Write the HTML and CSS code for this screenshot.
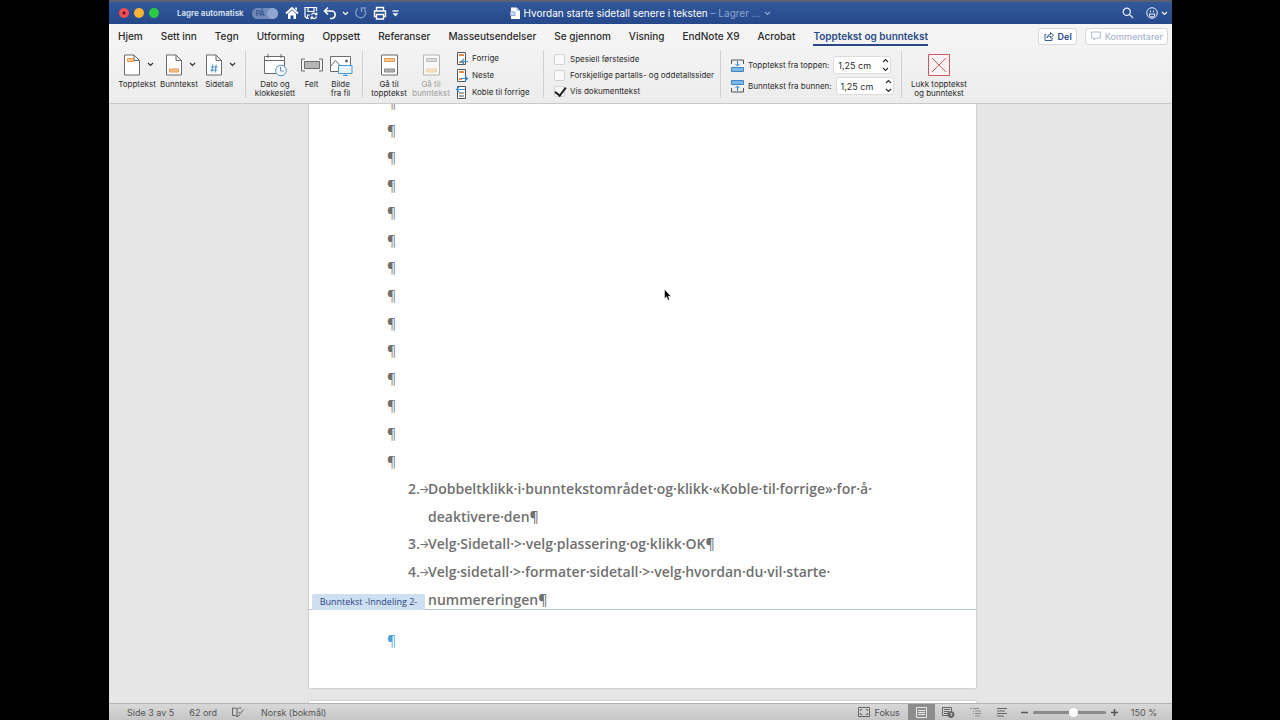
FILE: index.html
```html
<!DOCTYPE html>
<html lang="no">
<head>
    <meta charset="UTF-8">
    <meta name="viewport" content="width=device-width, initial-scale=1.0">
    <title>Hvordan starte sidetall senere i teksten</title>
    <link rel="stylesheet" href="styles.css">
</head>
<body>
    <!-- Felles symboler -->
    <svg class="defs" width="0" height="0">
        <symbol id="caret" viewBox="0 0 7 5"><path d="M1 1l2.500 2.500L6 1" fill="none" stroke="currentColor" stroke-width="1.100"/></symbol>
        <symbol id="page" viewBox="0 0 16 22"><path d="M.5 1h9.500l5.500 5.500v14.500h-15zM10 1v5.500h5.500" fill="#fff" stroke="#6b6b6b"/></symbol>
    </svg>

    <div class="app">
        <header class="titlebar">
            <div class="title-left">
                <div class="lights">
                    <button class="light red" aria-label="Lukk"></button>
                    <button class="light yellow" aria-label="Minimer"></button>
                    <button class="light green" aria-label="Zoom"></button>
                </div>
                <label for="autosave">Lagre automatisk</label>
                <span class="switch"><input type="checkbox" id="autosave" checked><span>PÅ</span></span>
                <div class="quick">
                    <button aria-label="Hjem"><svg width="14" height="14" viewBox="0 0 14 14"><path d="M1 7.500L7 2l6 5.500" fill="none" stroke="#fff" stroke-width="1.800"/><path d="M3 7.800L7 4.300l4 3.500V13H8.500V9.500h-3V13H3zM10 1.500h2v3l-2-1.800z" fill="#fff"/></svg></button>
                    <button aria-label="Lagre"><svg width="14" height="14" viewBox="0 0 14 14" fill="none" stroke="#fff" stroke-width="1.200"><path d="M5 12.500H3L1 10.500V1.500h11.500v3.500M4 1.500v4h6v-4M3.500 12V9H6"/><path d="M7.500 9.200a2.600 2.600 0 0 1 4.800-.7M12.800 6.500v2.200h-2M12.500 10.500a2.600 2.600 0 0 1-4.800.7M7.200 13.300v-2.200h2"/></svg></button>
                    <button aria-label="Angre"><svg width="14" height="14" viewBox="0 0 14 14" fill="none" stroke="#fff" stroke-width="1.600"><path d="M5 1.500L1.500 5 5 8.500M2 5h6.500a3.500 3.500 0 0 1 0 7.500H7"/></svg></button>
                    <button aria-label="Flere angrevalg"><svg width="7" height="5"><use href="#caret"/></svg></button>
                    <button aria-label="Gjør om" disabled><svg width="14" height="14" viewBox="0 0 14 14" fill="none" stroke="#7f97c6" stroke-width="1.400"><path d="M4 2.500a5 5 0 1 0 6.500 1M7.500 6V2h4.500"/></svg></button>
                    <button aria-label="Skriv ut"><svg width="14" height="14" viewBox="0 0 14 14" fill="none" stroke="#fff" stroke-width="1.400"><path d="M3.500 5V1.500h7V5M3.500 10.500H1.500V5h11v5.500h-2M3.500 8.500h7v4.500h-7z"/></svg></button>
                    <button aria-label="Tilpass"><svg width="7" height="7" viewBox="0 0 7 7"><path d="M.5 1h6" stroke="#fff" stroke-width="1.300"/><path d="M.5 3.200h6L3.500 6.500z" fill="#fff"/></svg></button>
                </div>
            </div>
            <div class="doc-title">
                <svg width="10" height="12" viewBox="0 0 10 12"><path d="M1 .5h5.500L10 4v8H1z" fill="#fff"/><path d="M6.500.5V4H10z" fill="#b8cbe8"/><path d="M0 4.500h5.500v4.500H0z" fill="#86aade"/><path d="M1 5.500l.8 2.300.9-2 .9 2 .8-2.300" fill="none" stroke="#fff" stroke-width=".7"/></svg>
                <span>Hvordan starte sidetall senere i teksten <em>– Lagrer ...</em></span>
                <svg class="dim" width="7" height="5"><use href="#caret"/></svg>
            </div>
            <div class="title-right">
                <button aria-label="Søk"><svg width="12" height="12" viewBox="0 0 12 12" fill="none" stroke="#e8eefa" stroke-width="1.200"><circle cx="4.800" cy="4.800" r="3.600"/><path d="M7.500 7.500l3.700 3.700"/></svg></button>
                <button aria-label="Tilbakemelding"><svg width="12" height="12" viewBox="0 0 12 12" fill="none" stroke="#e8eefa"><circle cx="6" cy="6" r="5.300"/><path d="M3 7a3 3 0 0 0 6 0zM4.500 3.500v1.800M7.500 3.500v1.800"/></svg><svg width="7" height="5"><use href="#caret"/></svg></button>
            </div>
        </header>

        <nav class="tabs">
            <a href="#">Hjem</a>
            <a href="#">Sett inn</a>
            <a href="#">Tegn</a>
            <a href="#">Utforming</a>
            <a href="#">Oppsett</a>
            <a href="#">Referanser</a>
            <a href="#">Masseutsendelser</a>
            <a href="#">Se gjennom</a>
            <a href="#">Visning</a>
            <a href="#">EndNote X9</a>
            <a href="#">Acrobat</a>
            <a href="#" class="active">Topptekst og bunntekst</a>
            <div class="tab-actions">
                <button class="share"><svg width="10" height="10" viewBox="0 0 10 10" fill="none" stroke="#2b4a86" stroke-width=".9"><path d="M2.500 3.500H1v6h7V7"/><path d="M3 7c.2-2.500 1.500-3.500 3.500-3.500V1.500l3 2.700-3 2.700V5.200C5 5.200 4 5.700 3 7z"/></svg>Del</button>
                <button class="comments"><svg width="10" height="10" viewBox="0 0 10 10" fill="none" stroke="#a9b3cc" stroke-width=".9"><path d="M.6 1h8.800v6H5L3 9V7H.6z"/></svg>Kommentarer</button>
            </div>
        </nav>

        <div class="ribbon">
            <div class="group insert">
                <button class="tool">
                    <span class="icon with-caret"><svg width="16" height="22" viewBox="0 0 16 22"><use href="#page"/><path d="M3.500 4.500h6v3h-6z" fill="#f8c78d" stroke="#e5994f"/></svg><svg width="7" height="5"><use href="#caret"/></svg></span>
                    Topptekst
                </button>
                <button class="tool">
                    <span class="icon with-caret"><svg width="16" height="22" viewBox="0 0 16 22"><use href="#page"/><path d="M3.500 15h9v3h-9z" fill="#f8c78d" stroke="#e5994f"/></svg><svg width="7" height="5"><use href="#caret"/></svg></span>
                    Bunntekst
                </button>
                <button class="tool small">
                    <span class="icon with-caret"><svg width="16" height="22" viewBox="0 0 16 22"><use href="#page"/><path d="M6.800 10.500l-1 8M10.200 10.500l-1 8M4.800 13h6.800M4.400 16h6.800" stroke="#4a90c8" fill="none"/></svg><svg width="7" height="5"><use href="#caret"/></svg></span>
                    Sidetall
                </button>
            </div>

            <div class="group fields">
                <button class="tool wide">
                    <span class="icon"><svg width="24" height="24" viewBox="0 0 24 24" fill="none" stroke="#6b6b6b"><path d="M1.500 3.500h20v17h-20z" fill="#fff"/><path d="M1.500 7.500h20M5 1v4M18 1v4"/><circle cx="18" cy="17.500" r="5.300" fill="#fff" stroke="#4a8fc7"/><path d="M17.500 14v4h3.500" stroke="#4a8fc7"/></svg></span>
                    Dato og<br>klokkeslett
                </button>
                <button class="tool slim">
                    <span class="icon"><svg width="22" height="14" viewBox="0 0 22 14" fill="none" stroke="#6b6b6b"><path d="M4 1H.5v12H4M18 1h3.500v12H18"/><path d="M3.500 3.500h15v7h-15z" fill="#b5b5b5"/></svg></span>
                    Felt
                </button>
                <button class="tool slim">
                    <span class="icon"><svg width="24" height="22" viewBox="0 0 24 22" fill="none" stroke="#6b6b6b"><path d="M1.500 2.500h20v15h-20z" fill="#fff"/><path d="M1.500 12.500l5-6 7 8"/><circle cx="17.500" cy="7" r="1" fill="#333"/><path d="M9.500 11.500h13.500v8H9.500z" fill="#eaf4fd" stroke="#4a9ad8"/><path d="M16.500 19.500v2M14 21.500h5" stroke="#4a9ad8"/></svg></span>
                    Bilde<br>fra fil
                </button>
            </div>

            <div class="group navigate">
                <button class="tool">
                    <span class="icon"><svg width="17" height="22" viewBox="0 0 17 22"><path d="M.5 1h16v20H.5z" fill="#fff" stroke="#6b6b6b"/><path d="M3.500 4.500h10v3h-10z" fill="#f8c78d" stroke="#e5994f"/><path d="M3.500 15h10v3h-10z" fill="#b5b5b5" stroke="#888"/></svg></span>
                    Gå til<br>topptekst
                </button>
                <button class="tool" disabled>
                    <span class="icon"><svg width="17" height="22" viewBox="0 0 17 22"><path d="M.5 1h16v20H.5z" fill="#f8f8f8" stroke="#b5b5b5"/><path d="M3.500 4.500h10v3h-10z" fill="#dcdcdc" stroke="#bcbcbc"/><path d="M3.500 15h10v3h-10z" fill="#fbe5c8" stroke="#eccfa8"/></svg></span>
                    Gå til<br>bunntekst
                </button>
                <div class="rows">
                    <button><svg width="12" height="13" viewBox="0 0 12 13" fill="none"><path d="M1.500.5h8v12h-8z" fill="#fff" stroke="#555"/><path d="M3 3h5M3 10h5" stroke="#e5894a" stroke-width="2"/><path d="M12 9.500H6M8 7L5.500 9.500 8 12" stroke="#3a8bd0" stroke-width="1.200"/></svg>Forrige</button>
                    <button><svg width="12" height="13" viewBox="0 0 12 13" fill="none"><path d="M1.500.5h8v12h-8z" fill="#fff" stroke="#555"/><path d="M3 3h5M3 10h3" stroke="#e5894a" stroke-width="2"/><path d="M5 9.500h6M9 7l2.500 2.500L9 12" stroke="#3a8bd0" stroke-width="1.200"/></svg>Neste</button>
                    <button><svg width="12" height="13" viewBox="0 0 12 13" fill="none"><path d="M1.500.5h8v12h-8z" fill="#fff" stroke="#555"/><path d="M3 7h5M3 10h5" stroke="#888" stroke-width="1.500"/><path d="M9 3.500H1M3 1L.7 3.500 3 6" stroke="#3a8bd0" stroke-width="1.200"/></svg>Koble til forrige</button>
                </div>
            </div>

            <div class="group options">
                <label><input type="checkbox">Spesiell førsteside</label>
                <label><input type="checkbox">Forskjellige partalls- og oddetallssider</label>
                <label><input type="checkbox" checked>Vis dokumenttekst</label>
            </div>

            <div class="group position">
                <div class="field">
                    <svg width="13" height="13" viewBox="0 0 13 13"><path d="M.5 5V1h12v4" fill="none" stroke="#555"/><path d="M.5 8.500h12v4H.5z" fill="#7db8ea" stroke="#3f87c4"/><path d="M6.500 2v5M4.500 5l2 2 2-2" fill="none" stroke="#3a8bd0"/></svg>
                    <label for="top">Topptekst fra toppen:</label>
                    <span class="spin"><input type="text" id="top" value="1,25 cm"><span class="steps"><button aria-label="Opp"><svg width="7" height="5"><use href="#caret"/></svg></button><button aria-label="Ned"><svg width="7" height="5"><use href="#caret"/></svg></button></span></span>
                </div>
                <div class="field">
                    <svg width="13" height="13" viewBox="0 0 13 13"><path d="M.5 8v4h12V8" fill="none" stroke="#555"/><path d="M.5.5h12v4H.5z" fill="#7db8ea" stroke="#3f87c4"/><path d="M6.500 11V6M4.500 8l2-2 2 2" fill="none" stroke="#3a8bd0"/></svg>
                    <label for="bottom">Bunntekst fra bunnen:</label>
                    <span class="spin"><input type="text" id="bottom" value="1,25 cm"><span class="steps"><button aria-label="Opp"><svg width="7" height="5"><use href="#caret"/></svg></button><button aria-label="Ned"><svg width="7" height="5"><use href="#caret"/></svg></button></span></span>
                </div>
            </div>

            <div class="group close">
                <button class="tool">
                    <span class="icon"><svg width="22" height="22" viewBox="0 0 22 22" fill="none" stroke="#cf5862"><path d="M.5.500h21v21H.5z" fill="#fbf5f5"/><path d="M4 4l14 14M18 4L4 18"/></svg></span>
                    Lukk topptekst<br>og bunntekst
                </button>
            </div>
        </div>

        <main class="canvas">
            <div class="page">
                <div class="text">
                    <p>¶</p>
                    <p>¶</p>
                    <p>¶</p>
                    <p>¶</p>
                    <p>¶</p>
                    <p>¶</p>
                    <p>¶</p>
                    <p>¶</p>
                    <p>¶</p>
                    <p>¶</p>
                    <p>¶</p>
                    <p>¶</p>
                    <p>¶</p>
                    <p>¶</p>
                    <div class="item two"><b>2.</b><i>→</i><span>Dobbeltklikk·i·bunntekstområdet·og·klikk·«Koble·til·forrige»·for·å·<br>deaktivere·den¶</span></div>
                    <div class="item"><b>3.</b><i>→</i><span>Velg·Sidetall·&gt;·velg·plassering·og·klikk·OK¶</span></div>
                    <div class="item two"><b>4.</b><i>→</i><span>Velg·sidetall·&gt;·formater·sidetall·&gt;·velg·hvordan·du·vil·starte·<br>nummereringen¶</span></div>
                </div>
                <footer class="page-footer">
                    <span class="footer-tag">Bunntekst -Inndeling 2-</span>
                    <p>¶</p>
                </footer>
            </div>
            <div class="page next"></div>
            <svg class="pointer" width="8" height="12" viewBox="0 0 8 12"><path d="M.5.5v9l2-1.800 1.500 3.500 1.500-.7L4.200 7.200H7z" fill="#000" stroke="#fff" stroke-width=".5"/></svg>
        </main>

        <div class="status">
            <span class="pages">Side 3 av 5</span>
            <span class="words">62 ord</span>
            <button class="proof" aria-label="Stavekontroll"><svg width="12" height="11" viewBox="0 0 12 11" fill="none" stroke="#666"><path d="M5 9V2C4 1 2.500 1 .5 1v7.500h3L5 10l1.500-1.500H8M5 2c1-1 2-1 3-1h1.500"/><path d="M6.500 5l1.500 2L11.500 2.500"/></svg></button>
            <span>Norsk (bokmål)</span>
            <div class="views">
                <button class="focus"><svg width="12" height="10" viewBox="0 0 12 10" fill="none" stroke="#666"><path d="M.5.500h11v9H.5z"/><path d="M2.500 4V2.500H4M8 2.500h1.500V4M9.500 6v1.500H8M4 7.500H2.500V6"/></svg>Fokus</button>
                <button class="view on" aria-label="Utskriftsoppsett"><svg width="11" height="11" viewBox="0 0 11 11" fill="none" stroke="#e8e8e8"><path d="M.5.500h10v10H.5zM2 3.500h7M2 5.500h7M2 7.500h7"/></svg></button>
                <button class="view" aria-label="Nettoppsett"><svg width="13" height="11" viewBox="0 0 13 11" fill="none" stroke="#666"><path d="M6 8.500H.5v-8h9V4M2 2.500h6M2 4.500h5M2 6.500h4"/><circle cx="9" cy="7.500" r="3" fill="#666"/><path d="M8 6l2 1-1 2" stroke="#ccc"/></svg></button>
                <button class="view" aria-label="Disposisjon"><svg width="11" height="10" viewBox="0 0 11 10" stroke="#888"><path d="M0 1.500h2M3 1.500h6M3 4h1M5 4h6M3 6.500h1M5 6.500h6M5 9h5"/></svg></button>
                <button class="view" aria-label="Kladd"><svg width="10" height="10" viewBox="0 0 10 10" stroke="#666"><path d="M0 1.500h10M0 4h8M0 6.500h10M0 9h7"/></svg></button>
                <button class="zoom-btn" aria-label="Zoom ut"><svg width="7" height="7" viewBox="0 0 7 7"><path d="M0 3.500h7" stroke="#555" stroke-width="1.500"/></svg></button>
                <input type="range" min="0" max="100" value="56" aria-label="Zoom">
                <button class="zoom-btn" aria-label="Zoom inn"><svg width="7" height="7" viewBox="0 0 7 7"><path d="M0 3.500h7M3.500 0v7" stroke="#555" stroke-width="1.500"/></svg></button>
                <span class="percent">150 %</span>
            </div>
        </div>
    </div>
</body>
</html>
```
FILE: styles.css
```css
* {
    box-sizing: border-box;
}
body {
    margin: 0;
    padding: 0 108px 0 109px;
    background-color: #000;
    font-family: Inter, "Liberation Sans", sans-serif;
    font-size: 10px;
    color: #2b2b2b;
}
button {
    font: inherit;
    color: inherit;
    background: none;
    border: none;
    padding: 0;
}
p {
    margin: 0;
}
svg {
    display: block;
    flex: none;
}
.defs {
    position: absolute;
}
.app {
    height: 100vh;
    display: flex;
    flex-direction: column;
    background-color: #e6e6e6;
}

/* Tittellinje */
.titlebar {
    height: 24px;
    flex: none;
    display: grid;
    grid-template-columns: 1fr auto 1fr;
    align-items: center;
    border-top: 2px solid #5b6074;
    background: linear-gradient(#32599c, #25488a);
    color: #fff;
}
.title-left, .doc-title, .title-right, .lights, .quick {
    display: flex;
    align-items: center;
}
.title-left {
    padding-left: 10px;
    font-size: 8px;
    font-weight: 600;
    color: #dfe7f5;
}
.lights {
    gap: 5px;
    margin-right: 18px;
}
.light {
    width: 10px;
    height: 10px;
    border-radius: 50%;
}
.red {
    background: radial-gradient(circle, #6d0f14 0 1px, #ee4e55 2px);
}
.yellow {
    background-color: #f6b532;
}
.green {
    background-color: #2ecb42;
}
.switch {
    display: flex;
    align-items: center;
    width: 26px;
    height: 11px;
    margin: 0 7px 0 8px;
    padding-left: 4px;
    border-radius: 6px;
    background-color: #7089b9;
    position: relative;
    font-size: 7px;
    color: #30508c;
}
.switch input {
    appearance: none;
    position: absolute;
    right: 0;
    top: 0;
    width: 11px;
    height: 11px;
    margin: 0;
    border-radius: 50%;
    background-color: #90a6cf;
}
.quick {
    gap: 5px;
    color: #fff;
}
.doc-title {
    gap: 4px;
    color: #fff;
}
.doc-title em {
    font-style: normal;
    color: #8ea5d0;
}
.dim {
    color: #8ea5d0;
}
.title-right {
    justify-content: flex-end;
    gap: 12px;
    padding-right: 4px;
}
.title-right button {
    display: flex;
    align-items: center;
    gap: 3px;
    color: #fff;
}

/* Faner */
.tabs {
    height: 24px;
    flex: none;
    display: flex;
    align-items: center;
    gap: 18px;
    padding: 0 4px 0 9px;
    background-color: #f4f4f4;
    white-space: nowrap;
}
.tabs a {
    color: #2b2b2b;
    font-weight: 500;
    text-decoration: none;
    line-height: 15px;
    border-bottom: 2px solid transparent;
    border-top: 2px solid transparent;
}
.tabs .active {
    color: #2a4a86;
    font-weight: 600;
    border-bottom-color: #2a4a86;
}
.tab-actions {
    display: flex;
    gap: 8px;
    margin-left: auto;
}
.tab-actions button {
    display: flex;
    align-items: center;
    gap: 4px;
    height: 17px;
    padding: 0 4px 0 5px;
    border: 1px solid #d8d8d8;
    border-radius: 3px;
    background-color: #fff;
    font-size: 9px;
}
.tab-actions .share {
    color: #2b4a86;
    font-weight: 600;
}
.tab-actions .comments {
    color: #a9b3cc;
    font-weight: 500;
}

/* Bånd */
.ribbon {
    height: 56px;
    flex: none;
    display: flex;
    padding-top: 3px;
    border-bottom: 1px solid #c9c9c9;
    background: linear-gradient(#f3f3f3, #ececec);
    font-size: 8px;
    line-height: 9px;
    white-space: nowrap;
}
.group {
    display: flex;
    height: 47px;
    border-right: 1px solid #d0d0d0;
}
.tool {
    display: flex;
    flex-direction: column;
    align-items: center;
    text-align: center;
    width: 42px;
}
.tool:disabled {
    color: #a0a0a0;
}
.tool.small {
    width: 38px;
}
.tool.wide {
    width: 44px;
}
.tool.slim {
    width: 29px;
}
.icon {
    display: flex;
    align-items: center;
    justify-content: center;
    height: 27px;
    margin-bottom: 2px;
}
.with-caret {
    gap: 7px;
    padding-left: 4px;
}
.insert {
    width: 137px;
    padding-left: 7px;
}
.fields {
    width: 117px;
    padding-left: 7px;
}
.navigate {
    width: 181px;
    padding-left: 5px;
}
.rows {
    display: flex;
    flex-direction: column;
    gap: 4px;
    padding: 1px 0 0 4px;
}
.rows button {
    display: flex;
    align-items: center;
    gap: 4px;
    height: 13px;
}
.options {
    width: 177px;
    padding: 3px 0 0 10px;
    flex-direction: column;
    gap: 5px;
}
.options label {
    display: flex;
    align-items: center;
    gap: 5px;
}
.options input {
    appearance: none;
    flex: none;
    width: 11px;
    height: 11px;
    margin: 0;
    border: 1px solid #d2d2d2;
    border-radius: 2px;
    background-color: #fafafa;
}
.options input:checked::before {
    content: "";
    display: block;
    width: 5px;
    height: 9px;
    margin: -2px 0 0 2px;
    border: solid #222;
    border-width: 0 2px 2px 0;
    transform: rotate(38deg);
}
.position {
    width: 181px;
    padding: 5px 0 0 10px;
    flex-direction: column;
    gap: 3px;
}
.field {
    display: flex;
    align-items: center;
    gap: 4px;
}
.spin {
    display: flex;
    align-items: center;
    width: 58px;
    height: 18px;
    border: 1px solid #dcdcdc;
    border-radius: 3px;
    background-color: #fff;
    font-size: 9px;
}
.spin input {
    width: 48px;
    padding: 0 0 0 4px;
    border: none;
    background: none;
    font: inherit;
    color: inherit;
}
.steps {
    display: flex;
    flex-direction: column;
    gap: 4px;
}
.steps button:first-child {
    transform: rotate(180deg);
}
.close {
    padding-left: 3px;
    border-right: none;
}
.close .tool {
    width: 68px;
}

/* Dokument */
.canvas {
    flex: 1;
    min-height: 0;
    display: flex;
    flex-direction: column;
    gap: 13px;
    position: relative;
    overflow: hidden;
    padding: 0 196px 0 200px;
}
.page {
    flex: 1;
    min-height: 0;
    display: flex;
    flex-direction: column;
    background-color: #fff;
    box-shadow: 0 0 2px #aaa;
    font-family: "Open Sans", sans-serif;
    font-size: 14px;
    color: #707070;
    white-space: nowrap;
}
.page.next {
    flex: none;
    height: 2px;
}
.text {
    flex: 1;
    min-height: 0;
    display: grid;
    grid-auto-rows: minmax(0, 1fr);
    margin: -15px 0 -4px;
    line-height: 28px;
}
.text p, .page-footer p {
    padding-left: 78px;
}
.item {
    display: flex;
    padding-left: 99px;
    font-weight: 600;
}
.item.two {
    grid-row: span 2;
}
.item b {
    width: 11px;
    font-weight: 600;
}
.item i {
    width: 9px;
    font-family: Inter, sans-serif;
    font-size: 11px;
    font-style: normal;
    font-weight: 400;
}
.page-footer {
    flex: none;
    height: 79px;
    position: relative;
    padding-top: 17px;
    border-top: 1px solid #b7c3e0;
    line-height: 28px;
    color: #4f9fdc;
}
.footer-tag {
    position: absolute;
    left: 3px;
    bottom: 100%;
    width: 113px;
    height: 16px;
    border-radius: 2px 2px 0 0;
    background-color: #cfdff2;
    color: #2b4585;
    font-size: 9px;
    line-height: 16px;
    text-align: center;
}
.pointer {
    position: absolute;
    left: 555px;
    top: 185px;
}

/* Statuslinje */
.status {
    height: 17px;
    flex: none;
    display: flex;
    align-items: center;
    padding: 0 15px 0 18px;
    border-top: 1px solid #b3b3b3;
    background: linear-gradient(#d8d8d8, #c6c6c6);
    color: #555;
    font-size: 9px;
    white-space: nowrap;
}
.pages, .words {
    margin-right: 15px;
}
.proof {
    margin-right: 17px;
}
.views {
    display: flex;
    align-items: center;
    margin-left: auto;
}
.focus {
    display: flex;
    align-items: center;
    gap: 4px;
    margin-right: 8px;
}
.view {
    display: flex;
    align-items: center;
    justify-content: center;
    width: 27px;
    height: 16px;
}
.view.on {
    background-color: #8d8d8d;
}
.zoom-btn {
    margin: 0 5px;
}
.status input {
    appearance: none;
    width: 73px;
    height: 3px;
    margin: 0;
    border-radius: 2px;
    background-color: #8a8a8a;
}
.status input::-webkit-slider-thumb {
    appearance: none;
    width: 9px;
    height: 9px;
    border-radius: 50%;
    background-color: #fff;
}
.percent {
    margin-left: 8px;
}
```
